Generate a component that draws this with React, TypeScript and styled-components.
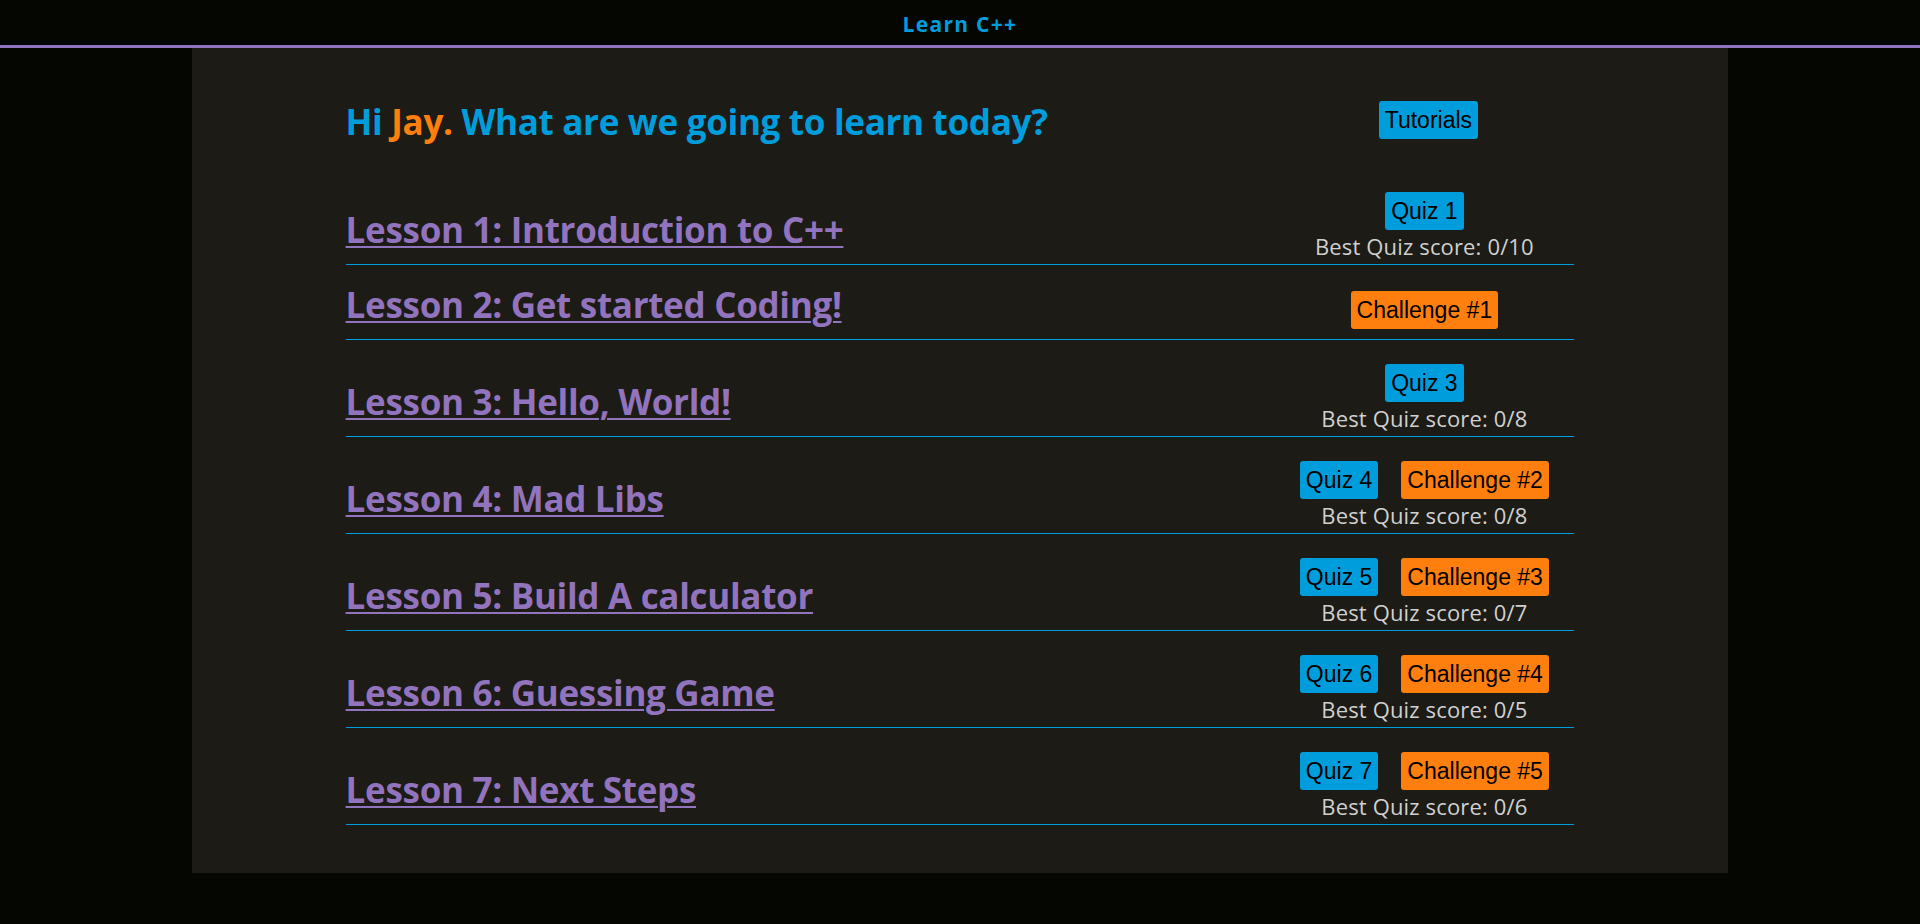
import React from "react";
import styled, { createGlobalStyle } from "styled-components";

const blue = "#009ddc";
const orange = "#ff7f0e";
const purple = "#9273be";

type Lesson = {
	title: string;
	quiz?: number;
	challenge?: number;
	score?: string;
};

const lessons: Lesson[] = [
	{ title: "Lesson 1: Introduction to C++", quiz: 1, score: "0/10" },
	{ title: "Lesson 2: Get started Coding!", challenge: 1 },
	{ title: "Lesson 3: Hello, World!", quiz: 3, score: "0/8" },
	{ title: "Lesson 4: Mad Libs", quiz: 4, challenge: 2, score: "0/8" },
	{ title: "Lesson 5: Build A calculator", quiz: 5, challenge: 3, score: "0/7" },
	{ title: "Lesson 6: Guessing Game", quiz: 6, challenge: 4, score: "0/5" },
	{ title: "Lesson 7: Next Steps", quiz: 7, challenge: 5, score: "0/6" },
];

const App = (): JSX.Element => {
	return (
		<>
			<GlobalStyle />
			<Header>
				<Brand>Learn C++</Brand>
			</Header>
			<Panel>
				<Inner>
					<HeadRow>
						<Greeting>
							Hi <Name>Jay.</Name> What are we going to learn today?
						</Greeting>
						<Actions>
							<Button $color={blue}>Tutorials</Button>
						</Actions>
					</HeadRow>
					{lessons.map((lesson) => (
						<LessonRow key={lesson.title}>
							<TitleCell>
								<LessonLink href="#">{lesson.title}</LessonLink>
							</TitleCell>
							<Side $compact={!lesson.score}>
								<Buttons>
									{lesson.quiz && <Button $color={blue}>Quiz {lesson.quiz}</Button>}
									{lesson.challenge && (
										<Button $color={orange}>Challenge #{lesson.challenge}</Button>
									)}
								</Buttons>
								{lesson.score && <Score>Best Quiz score: {lesson.score}</Score>}
							</Side>
						</LessonRow>
					))}
				</Inner>
			</Panel>
		</>
	);
};

const GlobalStyle = createGlobalStyle`
	body {
		margin: 0;
		background-color: #050602;
		font-family: "Open Sans", "Noto Sans", sans-serif;
	}
`;

const Header = styled.header`
	height: 45px;
	display: flex;
	align-items: center;
	justify-content: center;
	border-bottom: 3px solid ${purple};
`;

const Brand = styled.div`
	color: ${blue};
	font-size: 21px;
	font-weight: 700;
	letter-spacing: 1.3px;
	padding-top: 2px;
`;

const Panel = styled.main`
	width: 80%;
	margin: 0 auto;
	background-color: #1c1b15;
	padding: 53px 0 48px;
`;

const Inner = styled.div`
	width: 80%;
	margin: 0 auto;
`;

const HeadRow = styled.div`
	display: grid;
	grid-template-columns: 1fr 292px;
	align-items: center;
	height: 38px;
	margin-bottom: 29px;
`;

const Greeting = styled.h1`
	margin: 0;
	padding-top: 3px;
	color: ${blue};
	font-size: 35px;
	line-height: 35px;
	font-weight: 700;
	letter-spacing: -0.3px;
`;

const Name = styled.span`
	color: ${orange};
`;

const Actions = styled.div`
	display: flex;
	justify-content: center;
`;

const LessonRow = styled.div`
	display: grid;
	grid-template-columns: 1fr 300px;
	align-items: end;
	padding-bottom: 2px;
	border-bottom: 1px solid ${blue};
`;

const TitleCell = styled.div`
	margin-bottom: 11px;
`;

const LessonLink = styled.a`
	color: ${purple};
	font-size: 35px;
	line-height: 42px;
	font-weight: 700;
	letter-spacing: -0.3px;
	text-decoration: underline;
	text-decoration-thickness: 2px;
	text-underline-offset: 3px;
`;

const Side = styled.div<{ $compact: boolean }>`
	display: flex;
	flex-direction: column;
	align-items: center;
	padding-top: ${(p) => (p.$compact ? "26px" : "24px")};
	padding-bottom: ${(p) => (p.$compact ? "8px" : "0")};
`;

const Buttons = styled.div`
	display: flex;
	justify-content: center;
	gap: 23px;
`;

const Button = styled.button<{ $color: string }>`
	background-color: ${(p) => p.$color};
	color: #000;
	border: none;
	border-radius: 3px;
	padding: 6px;
	font-family: "Liberation Sans", Arial, sans-serif;
	font-size: 23px;
	line-height: 26px;
	cursor: pointer;
`;

const Score = styled.div`
	color: #d0d0d0;
	font-size: 22px;
	line-height: 32px;
	letter-spacing: 0.15px;
`;

export default App;
